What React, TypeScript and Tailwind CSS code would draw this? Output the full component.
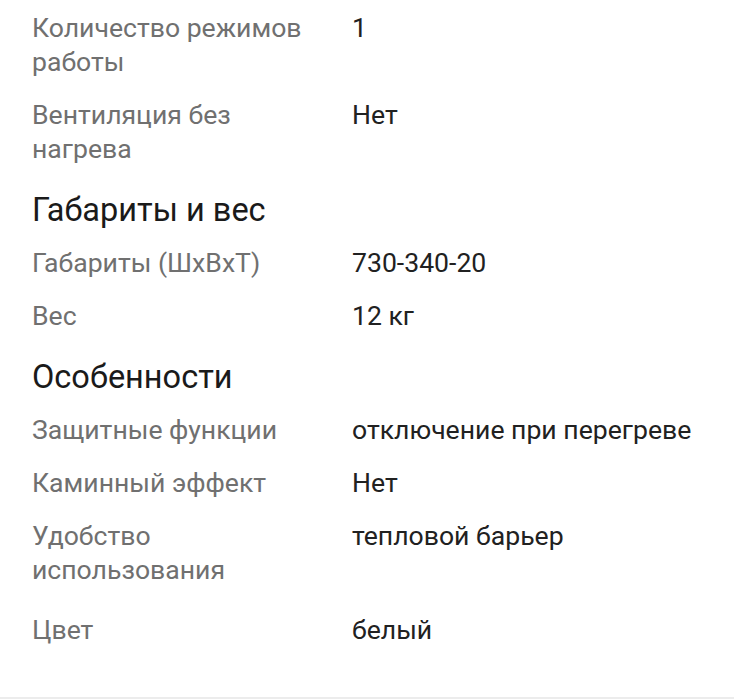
const sections: { title?: string; rows: [string, string][] }[] = [
  {
    rows: [
      ['Количество режимов работы', '1'],
      ['Вентиляция без нагрева', 'Нет'],
    ],
  },
  {
    title: 'Габариты и вес',
    rows: [
      ['Габариты (ШхВхТ)', '730-340-20'],
      ['Вес', '12 кг'],
    ],
  },
  {
    title: 'Особенности',
    rows: [
      ['Защитные функции', 'отключение при перегреве'],
      ['Каминный эффект', 'Нет'],
      ['Удобство использования', 'тепловой барьер'],
      ['Цвет', 'белый'],
    ],
  },
];

function SpecRow({ label, value, last }: { label: string; value: string; last?: boolean }) {
  return (
    <div className={`flex pb-[19px] ${last ? 'mt-[7px]' : ''}`}>
      <div className="w-[320px] shrink-0 pr-[30px] text-[#707070]">{label}</div>
      <div className="text-[#212121]">{value}</div>
    </div>
  );
}

export default function App() {
  return (
    <div
      className="w-[734px] h-[699px] bg-white flex flex-col overflow-hidden"
      style={{ fontFamily: 'Roboto, "Noto Sans", sans-serif' }}
    >
      <div className="flex-1 pl-8 pt-[11px] text-[26.6px] leading-[34px]">
        {sections.map((s, i) => (
          <div key={i}>
            {s.title && (
              <h2 className="mt-[7px] mb-[18px] text-[32.5px] leading-[36px] text-[#1a1a1a]">
                {s.title}
              </h2>
            )}
            {s.rows.map(([l, v], j) => (
              <SpecRow key={l} label={l} value={v} last={i === 2 && j === s.rows.length - 1} />
            ))}
          </div>
        ))}
      </div>
      <div className="h-[2px] bg-[#ececec]" />
    </div>
  );
}
